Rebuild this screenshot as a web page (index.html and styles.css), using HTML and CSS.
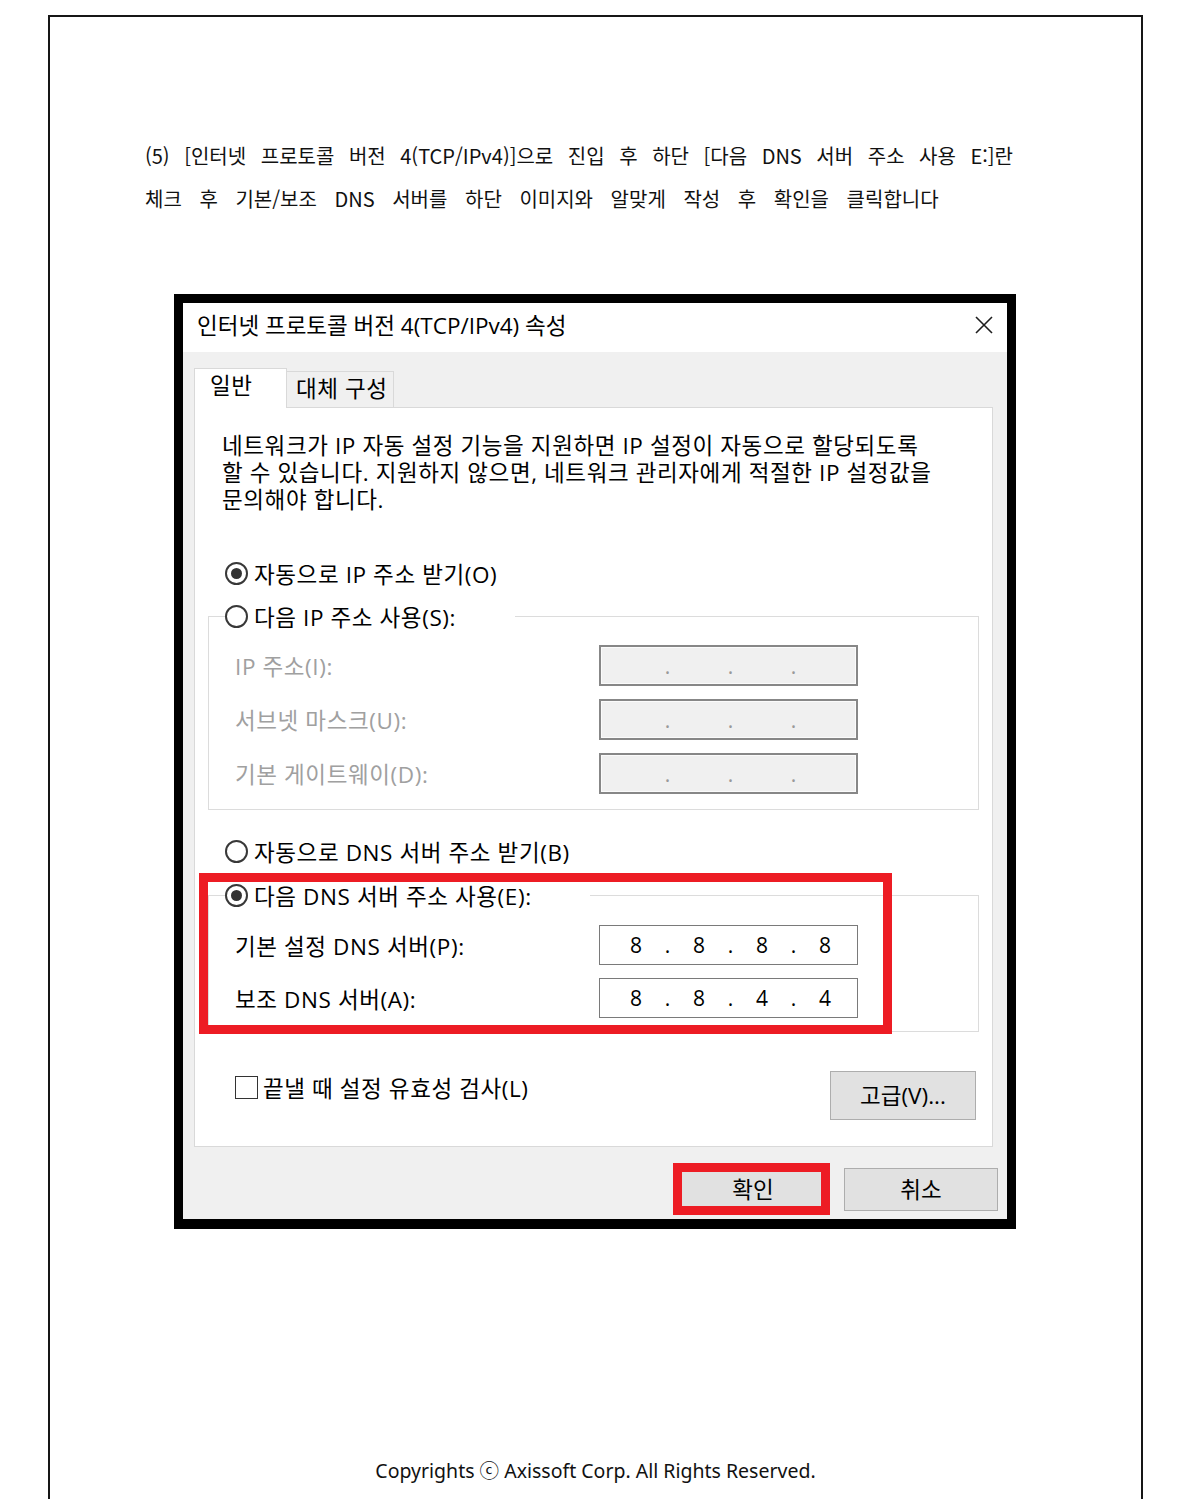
FILE: index.html
```html
<!DOCTYPE html>
<html lang="ko">
<head>
    <meta charset="UTF-8" />
    <title>DNS 서버 설정</title>
    <meta name="viewport" content="width=device-width, initial-scale=1.0" />
    <link rel="stylesheet" href="styles.css">
</head>
<body>
    <div class="page">
        <p class="step"><span class="justified">(5) [인터넷 프로토콜 버전 4(TCP/IPv4)]으로 진입 후 하단 [다음 DNS 서버 주소 사용 E:]란</span>체크 후 기본/보조 DNS 서버를 하단 이미지와 알맞게 작성 후 확인을 클릭합니다</p>

        <div class="dialog">
            <div class="titlebar">
                <span>인터넷 프로토콜 버전 4(TCP/IPv4) 속성</span>
                <svg class="close" width="18" height="18" viewBox="0 0 18 18">
                    <path d="M1 1L17 17M17 1L1 17" stroke="#1e1e1e" stroke-width="1.6" fill="none" />
                </svg>
            </div>

            <div class="dlg-body">
                <div class="tabs">
                    <div class="tab active">일반</div>
                    <div class="tab">대체 구성</div>
                </div>

                <div class="panel">
                    <p class="desc">네트워크가 IP 자동 설정 기능을 지원하면 IP 설정이 자동으로 할당되도록<br>할 수 있습니다. 지원하지 않으면, 네트워크 관리자에게 적절한 IP 설정값을<br>문의해야 합니다.</p>

                    <div class="radio on top-opt"><span class="ring"></span>자동으로 IP 주소 받기(O)</div>

                    <fieldset class="group ip-group">
                        <legend><div class="radio"><span class="ring"></span>다음 IP 주소 사용(S):</div></legend>
                        <div class="field off">
                            <span class="name">IP 주소(I):</span>
                            <div class="ip"><b></b><i>.</i><b></b><i>.</i><b></b><i>.</i><b></b></div>
                        </div>
                        <div class="field off">
                            <span class="name">서브넷 마스크(U):</span>
                            <div class="ip"><b></b><i>.</i><b></b><i>.</i><b></b><i>.</i><b></b></div>
                        </div>
                        <div class="field off">
                            <span class="name">기본 게이트웨이(D):</span>
                            <div class="ip"><b></b><i>.</i><b></b><i>.</i><b></b><i>.</i><b></b></div>
                        </div>
                    </fieldset>

                    <div class="radio mid-opt"><span class="ring"></span>자동으로 DNS 서버 주소 받기(B)</div>

                    <div class="marked">
                        <fieldset class="group dns-group">
                            <legend><div class="radio on"><span class="ring"></span>다음 DNS 서버 주소 사용(E):</div></legend>
                            <div class="field">
                                <span class="name">기본 설정 DNS 서버(P):</span>
                                <div class="ip"><b>8</b><i>.</i><b>8</b><i>.</i><b>8</b><i>.</i><b>8</b></div>
                            </div>
                            <div class="field">
                                <span class="name">보조 DNS 서버(A):</span>
                                <div class="ip"><b>8</b><i>.</i><b>8</b><i>.</i><b>4</b><i>.</i><b>4</b></div>
                            </div>
                        </fieldset>
                    </div>

                    <div class="check-row">
                        <div class="check"><span class="box"></span>끝낼 때 설정 유효성 검사(L)</div>
                        <button class="btn adv">고급(V)...</button>
                    </div>
                </div>

                <div class="actions">
                    <button class="btn marked-btn">확인</button>
                    <button class="btn">취소</button>
                </div>
            </div>
        </div>

        <footer class="copy">Copyrights ⓒ Axissoft Corp. All Rights Reserved.</footer>
    </div>
</body>
</html>
```

FILE: styles.css
```css
*,
*::before,
*::after {
    box-sizing: border-box;
}

body {
    margin: 0;
    background: #fff;
    color: #111;
    font-family: "Noto Sans", "Noto Sans CJK KR", sans-serif;
}

.page {
    margin: 15px 0 0 48px;
    width: 1095px;
    min-height: 1490px;
    border: 2px solid #161616;
    border-bottom: none;
}

.step {
    margin: 0;
    padding: 117px 0 0 95px;
    font-family: "Noto Sans CJK KR", sans-serif;
    font-size: 20px;
    line-height: 43px;
    word-spacing: 12px;
}

/* first line is stretched to the column width */
.step .justified {
    display: block;
    width: 868px;
    word-spacing: 6px;
    text-align: justify;
    text-align-last: justify;
}

/* window frame */
.dialog {
    margin: 74px 0 0 124px;
    width: 842px;
    height: 935px;
    border: 9px solid #000;
    border-bottom-width: 10px;
    display: flex;
    flex-direction: column;
    font-family: "Open Sans", "Noto Sans CJK KR", sans-serif;
    font-size: 22.5px;
    letter-spacing: 0.6px;
    color: #000;
}

.titlebar {
    height: 49px;
    flex: none;
    background: #fff;
    display: flex;
    align-items: center;
    justify-content: space-between;
    padding: 0 14px 6px 14px;
    letter-spacing: 0;
}

.dlg-body {
    flex: 1;
    background: #f0f0f0;
    padding: 16px 14px 0 11px;
}

.tabs {
    display: flex;
    align-items: flex-end;
    height: 40px;
    margin-bottom: -1px;
    position: relative;
    z-index: 1;
}

.tab {
    width: 107px;
    height: 36px;
    margin-bottom: 1px;
    padding: 0 0 5px 9px;
    display: flex;
    align-items: center;
    background: #f0f0f0;
    border: 1px solid #d9d9d9;
    border-left: none;
    border-bottom: none;
}

.tab.active {
    width: 93px;
    height: 40px;
    margin-bottom: 0;
    padding-left: 15px;
    padding-bottom: 8px;
    background: #fff;
    border-left: 1px solid #d9d9d9;
}

.panel {
    height: 740px;
    padding: 24px 13px 0 13px;
    background: #fff;
    border: 1px solid #d9d9d9;
}

.desc {
    margin: 0 0 0 14px;
    line-height: 27px;
}

/* radio buttons and group boxes */
.radio {
    display: flex;
    align-items: center;
    gap: 6px;
    height: 30px;
    white-space: nowrap;
}

.radio .ring {
    width: 23px;
    height: 23px;
    flex: none;
    margin-left: -1px;
    border: 2px solid #383838;
    border-radius: 50%;
    background: #fff;
    display: grid;
    place-items: center;
}

.radio.on .ring::after {
    content: "";
    width: 11px;
    height: 11px;
    border-radius: 50%;
    background: #333;
}

.top-opt {
    margin: 45px 0 0 18px;
}

.mid-opt {
    margin: 26px 0 0 18px;
}

.group {
    margin: 13px 0 0;
    padding: 0 0 15px 17px;
    min-width: 0;
    border: 1px solid #dcdcdc;
}

.group legend {
    padding: 0;
    width: 289px;
}

.dns-group {
    margin: 0;
    padding-bottom: 13px;
}

.dns-group legend {
    width: 364px;
}

.marked {
    position: relative;
    margin-top: 14px;
}

.marked::after {
    content: "";
    position: absolute;
    top: -7px;
    left: -9px;
    bottom: -2px;
    width: 693px;
    border: 9px solid #ed1c24;
}

.field {
    display: flex;
    align-items: center;
    margin-top: 13px;
}

.field:first-of-type {
    margin-top: 14px;
}

.dns-group .field:first-of-type {
    margin-top: 15px;
}

.field .name {
    width: 364px;
    margin-left: 9px;
}

.field.off .name {
    color: #a0a0a0;
}

.ip {
    width: 259px;
    height: 40px;
    padding-left: 11px;
    display: flex;
    align-items: center;
    border: 1px solid #7a7a7a;
    background: #fff;
    font-size: 21px;
    letter-spacing: 0;
}

.ip b {
    width: 50px;
    text-align: center;
    font-weight: normal;
}

.ip i {
    width: 13px;
    text-align: center;
    font-style: normal;
}

.field.off .ip {
    height: 41px;
    border: 2px solid #878787;
    box-shadow: inset 0 0 0 1px #fbfbfb;
    background: #f0f0f0;
    color: #999;
    padding-left: 10px;
}

/* bottom controls */
.check-row {
    margin-top: 39px;
    padding: 0 3px 0 27px;
    display: flex;
    align-items: flex-start;
    justify-content: space-between;
}

.check {
    display: flex;
    align-items: center;
    gap: 5px;
    height: 33px;
}

.check .box {
    width: 23px;
    height: 23px;
    border: 1.5px solid #333;
    background: #fff;
}

.btn {
    width: 154px;
    height: 43px;
    padding: 0 0 2px;
    font: inherit;
    color: #000;
    background: #e1e1e1;
    border: 1px solid #adadad;
}

.btn.adv {
    width: 146px;
    height: 49px;
}

.actions {
    display: flex;
    justify-content: flex-end;
    gap: 14px;
    margin-right: -5px;
    padding-top: 21px;
}

.marked-btn {
    position: relative;
}

.marked-btn::after {
    content: "";
    position: absolute;
    top: -6px;
    left: -4px;
    right: -1px;
    bottom: -5px;
    border: 9px solid #ed1c24;
}

.copy {
    margin-top: 227px;
    text-align: center;
    font-size: 19.5px;
    line-height: 30px;
}
```
